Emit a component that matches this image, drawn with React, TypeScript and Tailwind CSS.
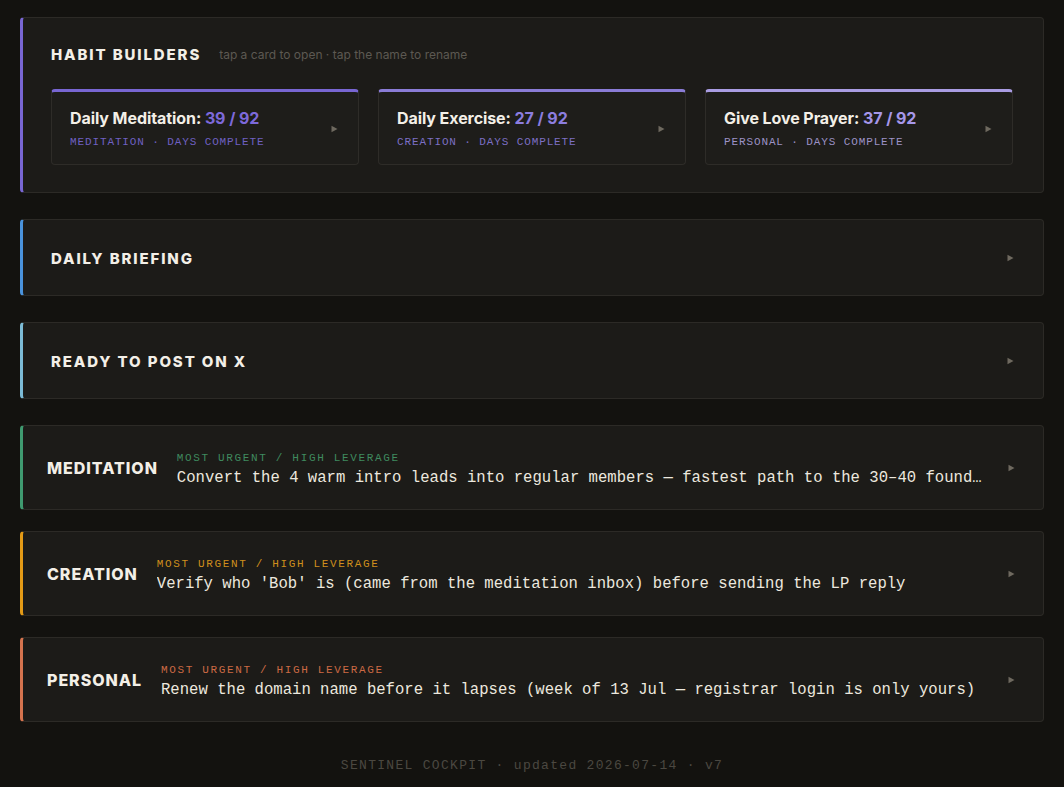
const SANS = "font-['Inter','Noto_Sans',sans-serif]";
const MONO = "font-['Liberation_Mono','DejaVu_Sans_Mono',monospace]";

const HABITS = [
  { name: 'Daily Meditation', done: 39, total: 92, area: 'MEDITATION', bar: 'border-t-[#7866d2]', num: 'text-[#7d69da]', sub: 'text-[#6f60c2]' },
  { name: 'Daily Exercise', done: 27, total: 92, area: 'CREATION', bar: 'border-t-[#8a7cd6]', num: 'text-[#8c7ddf]', sub: 'text-[#7c6fc4]' },
  { name: 'Give Love Prayer', done: 37, total: 92, area: 'PERSONAL', bar: 'border-t-[#a99ce2]', num: 'text-[#a697ea]', sub: 'text-[#9c92c6]' },
];

const PRIORITIES = [
  {
    area: 'MEDITATION',
    edge: 'border-l-[#3f9a70]',
    label: 'text-[#3f8a5f]',
    text: 'Convert the 4 warm intro leads into regular members — fastest path to the 30–40 founding members before the autumn intake',
    gap: 'mb-[21px]',
  },
  {
    area: 'CREATION',
    edge: 'border-l-[#e39a16]',
    label: 'text-[#cf8f1c]',
    text: "Verify who 'Bob' is (came from the meditation inbox) before sending the LP reply",
    gap: 'mb-[21px]',
  },
  {
    area: 'PERSONAL',
    edge: 'border-l-[#d4734e]',
    label: 'text-[#cc6a44]',
    text: 'Renew the domain name before it lapses (week of 13 Jul — registrar login is only yours)',
    gap: '',
  },
];

function Arrow() {
  return (
    <svg width="7" height="8" viewBox="0 0 7 8" className="shrink-0">
      <path d="M0.5 0.8 L6.5 4 L0.5 7.2 Z" fill="#6e695f" />
    </svg>
  );
}

function HabitCard({ h }: { h: (typeof HABITS)[number] }) {
  return (
    <div
      className={`flex h-[76px] items-center justify-between rounded-[4px] border border-[#2e2c28] border-t-[3px] ${h.bar} bg-[#1e1d1a] pl-[18px] pr-[20px] pt-[1px]`}
    >
      <div>
        <div className={`${SANS} text-[16px] leading-[20px] font-bold text-[#f3efe7] tracking-[-0.005em]`}>
          {h.name}: <span className={h.num}>{h.done} / {h.total}</span>
        </div>
        <div className={`${MONO} mt-[7px] text-[11px] leading-[14px] tracking-[0.08em] ${h.sub}`}>
          {h.area} · DAYS COMPLETE
        </div>
      </div>
      <Arrow />
    </div>
  );
}

function Collapsed({ title, edge, gap }: { title: string; edge: string; gap: string }) {
  return (
    <div
      className={`${gap} flex h-[77px] items-center justify-between rounded-[4px] border border-[#2c2a26] border-l-[3px] ${edge} bg-[#1c1b18] pl-[28px] pr-[29px]`}
    >
      <h2 className={`${SANS} pt-[2px] text-[15px] leading-[20px] font-extrabold tracking-[0.125em] text-[#f3efe7]`}>{title}</h2>
      <Arrow />
    </div>
  );
}

export default function App() {
  return (
    <div className="min-h-screen bg-[#13120f] px-5 pt-[17px] pb-[14px]">
      <section className="mb-[26px] h-[176px] rounded-[4px] border border-[#2c2a26] border-l-[3px] border-l-[#7866d2] bg-[#1c1b18] pl-[28px] pr-[30px] pt-[27px]">
        <div className="mb-[24px] flex h-[20px] items-center gap-[18px]">
          <h2 className={`${SANS} text-[15px] leading-[20px] font-extrabold tracking-[0.125em] text-[#f3efe7]`}>HABIT BUILDERS</h2>
          <span className={`${SANS} text-[12px] text-[#5c5952]`}>tap a card to open · tap the name to rename</span>
        </div>
        <div className="grid grid-cols-3 gap-[19px]">
          {HABITS.map((h) => (
            <HabitCard key={h.name} h={h} />
          ))}
        </div>
      </section>

      <Collapsed title="DAILY BRIEFING" edge="border-l-[#4a93dc]" gap="mb-[26px]" />
      <Collapsed title="READY TO POST ON X" edge="border-l-[#7cbbd6]" gap="mb-[26px]" />

      {PRIORITIES.map((p) => (
        <div
          key={p.area}
          className={`${p.gap} flex h-[85px] items-center rounded-[4px] border border-[#2c2a26] border-l-[3px] ${p.edge} bg-[#1c1b18] pl-[24px] pr-[28px]`}
        >
          <h2 className={`${SANS} shrink-0 text-[16px] leading-[20px] font-extrabold tracking-[0.06em] text-[#f3efe7]`}>{p.area}</h2>
          <div className="ml-[19px] min-w-0 flex-1 pr-[20px] pt-[3px]">
            <div className={`${MONO} text-[11px] leading-[14px] tracking-[0.15em] ${p.label}`}>MOST URGENT / HIGH LEVERAGE</div>
            <div className={`${MONO} mt-[3px] truncate text-[15.6px] leading-[20px] text-[#ece8df]`}>{p.text}</div>
          </div>
          <Arrow />
        </div>
      ))}

      <footer className={`${MONO} mt-[35px] text-center text-[13px] leading-[18px] tracking-[0.1em] text-[#4b4841]`}>
        SENTINEL COCKPIT · updated 2026-07-14 · v7
      </footer>
    </div>
  );
}
